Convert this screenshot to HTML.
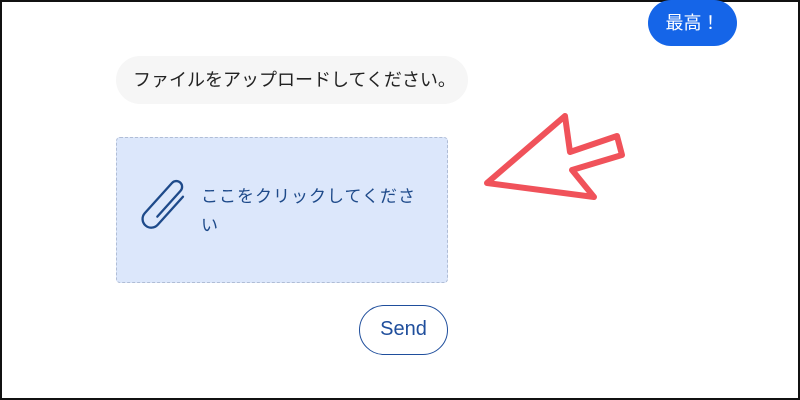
<!DOCTYPE html>
<html><head><meta charset="utf-8"><style>
body{margin:0;width:800px;height:400px;overflow:hidden;background:#fff;font-family:"Liberation Sans","Noto Sans CJK JP",sans-serif;position:relative}
.frame{position:absolute;left:0;top:0;width:796px;height:396px;border:2px solid #111}
.b1{position:absolute;left:648px;top:0;width:89px;height:46px;background:#1565e8;border-radius:23px;color:#fff;font-size:18px;line-height:46px;text-align:center}
.b2{position:absolute;left:116px;top:56px;width:352px;height:48px;background:#f6f6f6;border-radius:24px;color:#222;font-size:18px;line-height:48px;padding-left:17px;box-sizing:border-box}
.drop{position:absolute;left:116px;top:137px;width:332px;height:146px;box-sizing:border-box;background:#dce7fb;border:1.5px dashed #b0bdd6;border-radius:4px}
.txt{position:absolute;left:201px;top:182px;width:230px;color:#1e4a8a;font-size:17px;line-height:29px;letter-spacing:1px}
.send{position:absolute;left:359px;top:305px;width:89px;height:50px;box-sizing:border-box;border:1.5px solid #1f4e9c;border-radius:25px;color:#1f4e9c;font-size:20px;line-height:47px;text-align:center}
</style></head><body>
<div class="frame"></div>
<div class="b1">最高！</div>
<div class="b2">ファイルをアップロードしてください。</div>
<div class="drop"></div>
<svg style="position:absolute;left:134px;top:177px" width="60" height="60" viewBox="0 0 60 60">
<g transform="translate(30 30) rotate(42) scale(1.45) translate(-24 -24)">
<path d="M29 10 V36 a6 6 0 0 1 -12 0 V8 a4 4 0 0 1 8 0 V32" fill="none" stroke="#1e4a8a" stroke-width="1.6" stroke-linecap="round" stroke-linejoin="round"/>
</g>
</svg>
<div class="txt">ここをクリックしてくださ い</div>
<div class="send">Send</div>
<svg style="position:absolute;left:0;top:0" width="800" height="400">
<polygon points="487,183 565,116 570,152 617,136 622,155 572,170 594,197" fill="none" stroke="#f0525a" stroke-width="6" stroke-linejoin="round"/>
</svg>
</body></html>
